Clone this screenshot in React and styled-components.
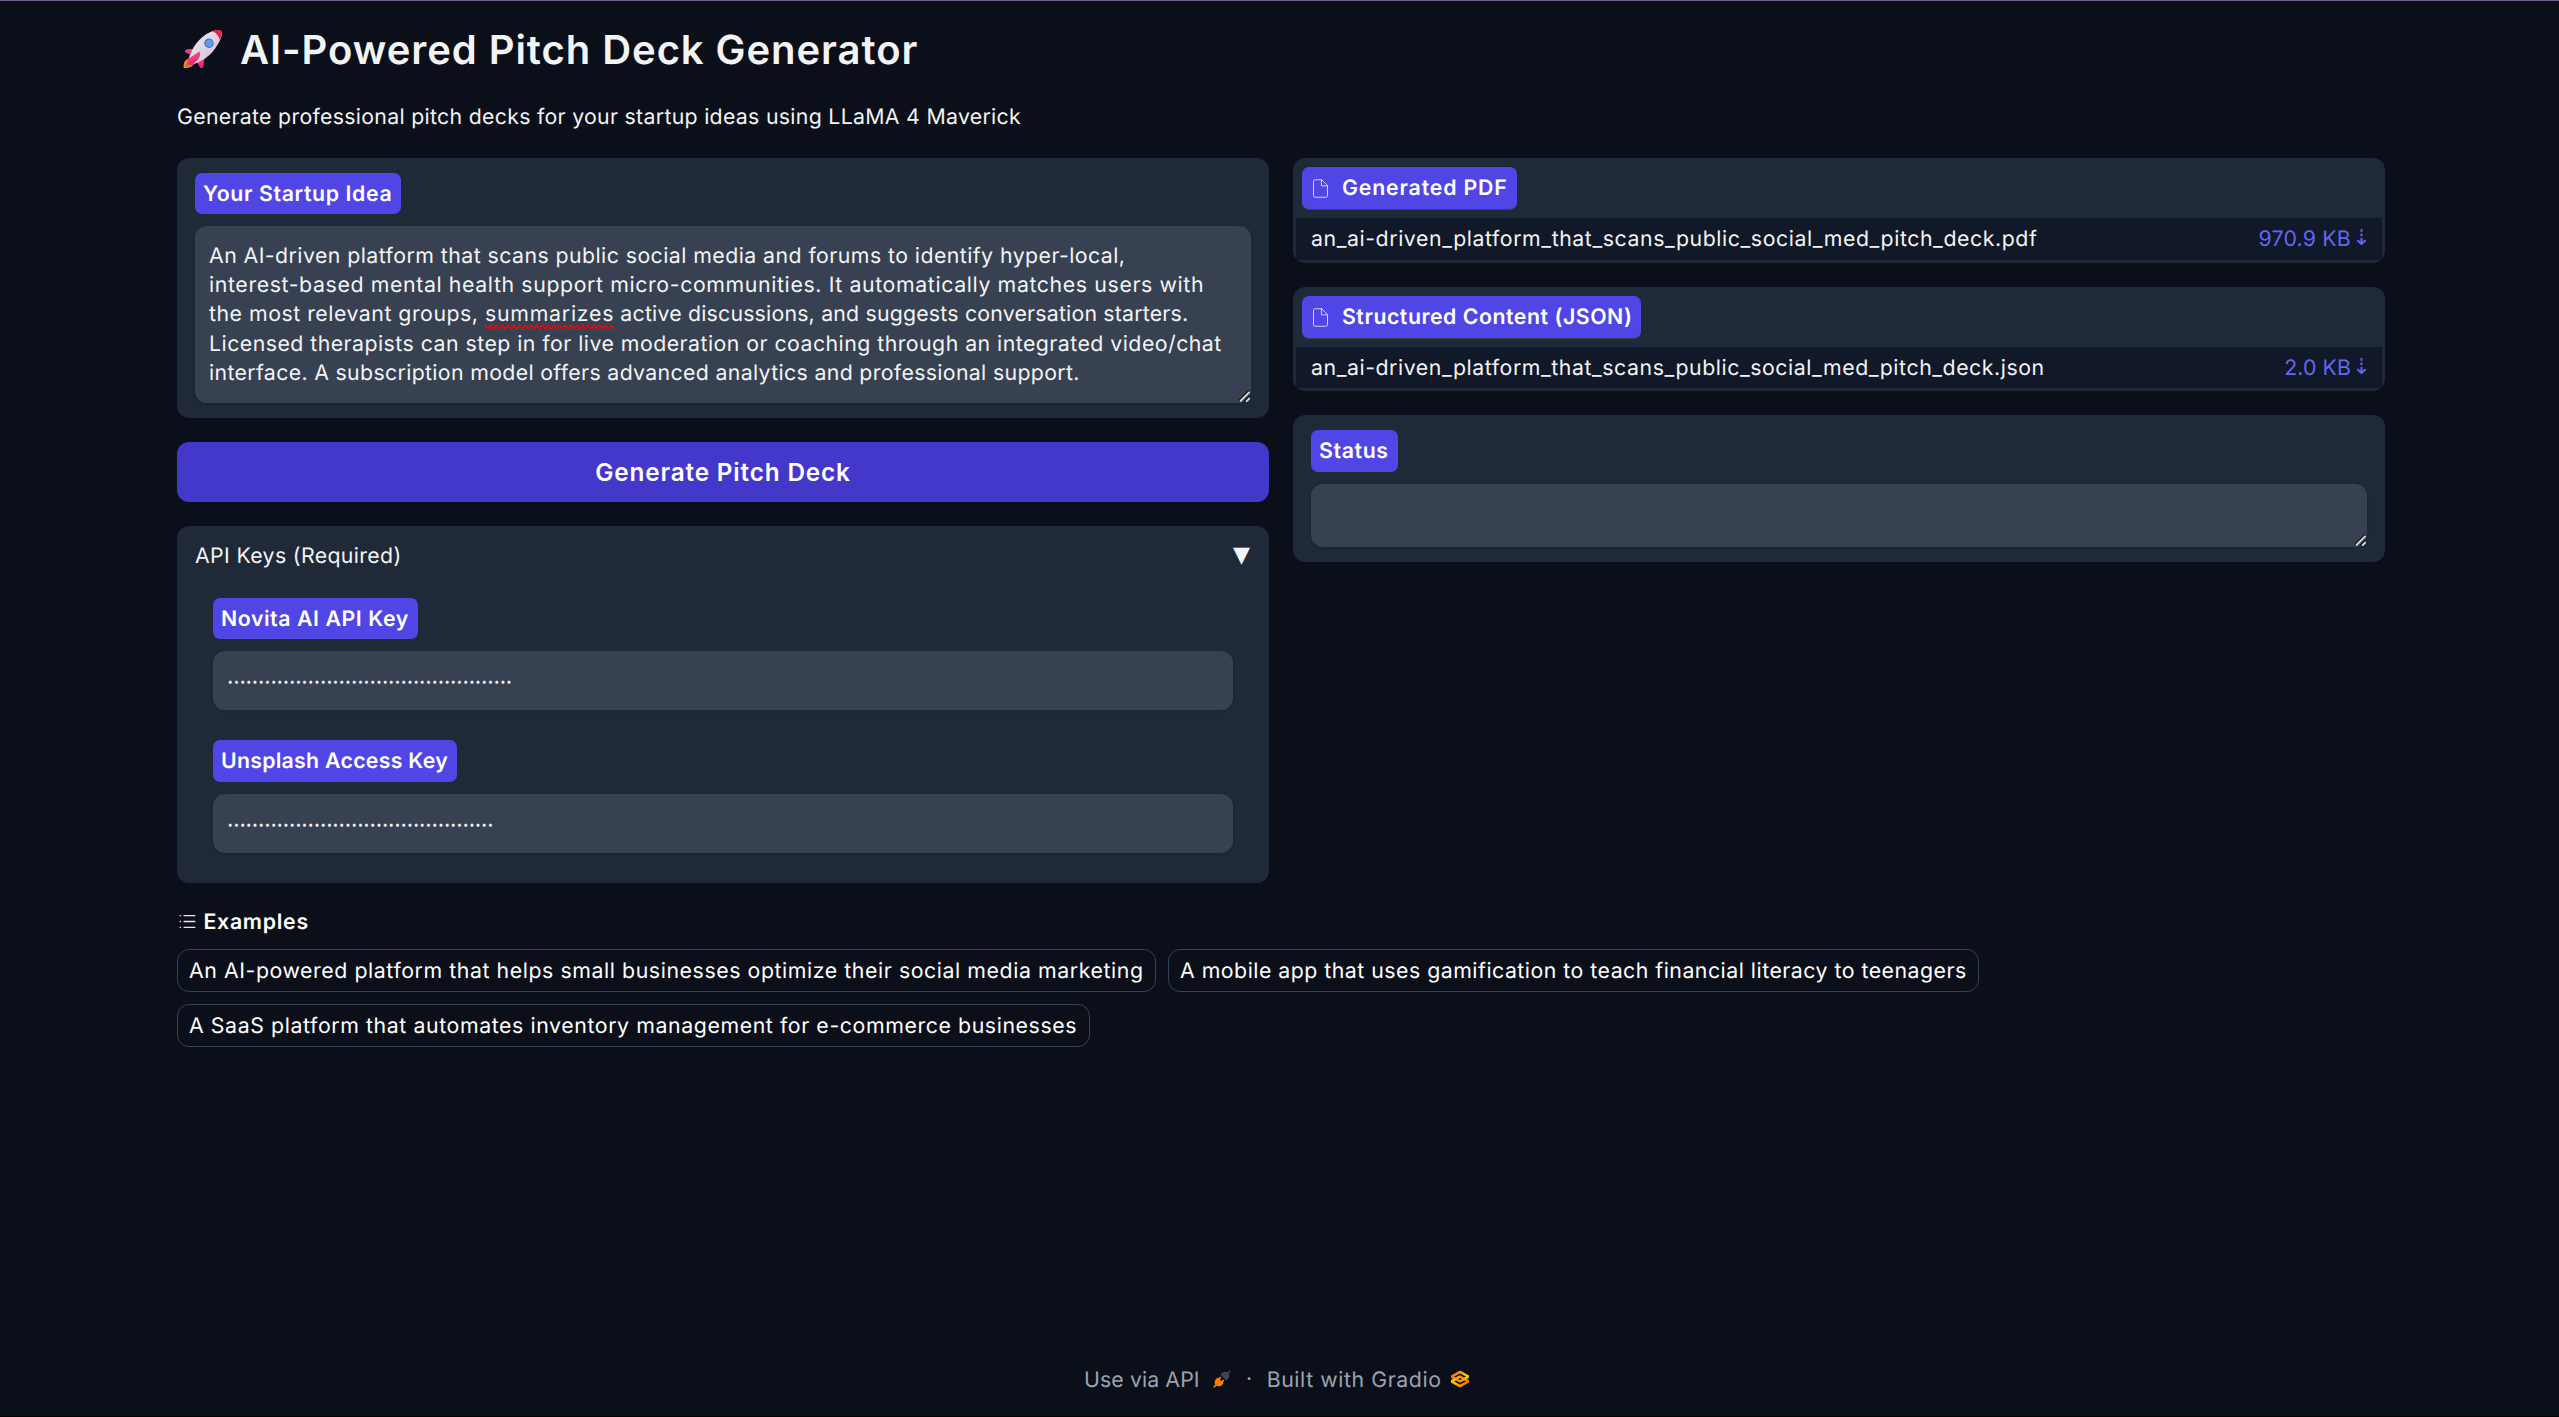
import React from "react";
import styled, { createGlobalStyle } from "styled-components";

const c = {
  page: "#0b0f19",
  block: "#1f2937",
  field: "#374151",
  row: "#111827",
  label: "#4f46e5",
  button: "#4338ca",
  link: "#6366f1",
  text: "#f3f4f6",
  muted: "#9ca3af",
};

const GlobalStyle = createGlobalStyle`
  * { box-sizing: border-box; }
  body {
    margin: 0;
    background: ${c.page};
    color: ${c.text};
    font-family: Inter, "Open Sans", sans-serif;
    font-size: 21.3px;
    line-height: 29.4px;
    text-rendering: geometricPrecision;
  }
`;

const Page = styled.div`
  height: 1417px;
  padding: 19px 174px 0 177px;
  border-top: 1px solid #74608f;
  border-bottom: 1px solid #000;
  display: flex;
  flex-direction: column;
  overflow: hidden;
`;

const Text = styled.span`
  display: inline-block;
  letter-spacing: ${(p) => p.$ls}px;
  white-space: pre;
  transform: translateY(${(p) => p.$y ?? 1}px);
`;

const Header = styled.header`
  height: 138px;
  flex: none;
`;

const Title = styled.h1`
  margin: 0 0 22px;
  height: 60px;
  padding-left: 2px;
  display: flex;
  align-items: center;
  gap: 17px;
  font-size: 40px;
  font-weight: 600;
  line-height: 60px;
`;

const Subtitle = styled.p`
  margin: 0;
`;

const Columns = styled.main`
  display: grid;
  grid-template-columns: 1092px 1092px;
  gap: 24px;
  align-items: start;
`;

const Column = styled.div`
  display: flex;
  flex-direction: column;
  gap: 24px;
`;

const Panel = styled.section`
  background: ${c.block};
  border-radius: 12px;
  padding: 15px 18px;
`;

const Label = styled.div`
  width: fit-content;
  height: ${(p) => p.$h || 41}px;
  padding: 0 9px 0 8px;
  display: flex;
  align-items: center;
  border-radius: 7px;
  background: ${c.label};
  color: #fff;
  font-weight: 600;
  box-shadow: ${(p) => (p.$line ? "0 1px 0 #374151" : "none")};
`;

const Area = styled.div`
  position: relative;
  margin-top: 12px;
  height: ${(p) => p.$h}px;
  padding: 14.5px 14px;
  border-radius: 12px;
  background: ${c.field};
  box-shadow: 0 1px 3px rgba(0, 0, 0, 0.12);
`;

const Line = styled.div`
  height: 29.4px;
  white-space: nowrap;
`;

const Misspelt = styled(Text)`
  position: relative;
`;

const Squiggle = styled.svg`
  position: absolute;
  left: 0;
  bottom: 0;
  width: 100%;
  height: 6px;
`;

const Grip = styled.svg`
  position: absolute;
  right: 1px;
  bottom: 1px;
  width: 12px;
  height: 12px;
`;

const Submit = styled.button`
  height: 60px;
  padding: 0 0 1px;
  border: 0;
  border-radius: 12px;
  background: ${c.button};
  color: #fff;
  font: 600 24.3px Inter, sans-serif;
`;

const Accordion = styled(Panel)`
  height: 357px;
`;

const AccordionHead = styled.div`
  height: 29px;
  margin-bottom: 13px;
  display: flex;
  justify-content: space-between;
`;

const Caret = styled.span`
  margin-right: 1px;
  font-family: "DejaVu Sans", sans-serif;
  font-size: 22px;
  line-height: 29px;
  color: ${c.text};
`;

const Form = styled.div`
  height: 285px;
  border-radius: 12px;
  background: #293341;
`;

const FormBody = styled.div`
  height: 100%;
  padding: 15px 18px;
  border-radius: 12px;
  background: ${c.block};
  display: flex;
  flex-direction: column;
  gap: 30px;
`;

const Secret = styled.div`
  margin-top: 12px;
  height: 59px;
  padding: 4px 0 0 14.5px;
  display: flex;
  align-items: center;
  border-radius: 12px;
  background: ${c.field};
  box-shadow: 0 1px 3px rgba(0, 0, 0, 0.12);
  font-size: 9.6px;
`;

const FilePanel = styled(Panel)`
  height: ${(p) => p.$h}px;
  padding: 9px 3px 3px 3px;
  overflow: hidden;
`;

const FileLabel = styled(Label)`
  margin: 0 0 9px 6px;
  padding-left: 7.5px;
`;

const FileIcon = styled.svg`
  width: 21px;
  height: 21px;
  margin-right: 11.5px;
  fill: none;
  stroke: #fff;
  stroke-width: 1;
  stroke-linecap: round;
  stroke-linejoin: round;
  opacity: 0.85;
`;

const FileRow = styled.div`
  height: ${(p) => p.$h}px;
  padding: 0 15px;
  display: flex;
  align-items: center;
  background: ${c.row};
`;

const Size = styled.span`
  margin-left: auto;
  display: flex;
  align-items: center;
  gap: 5px;
  color: ${c.link};
`;

const Down = styled.span`
  width: 11px;
  display: flex;
  justify-content: center;
  font-family: "DejaVu Sans", sans-serif;
  font-size: 22px;
`;

const ExamplesHead = styled.div`
  margin: 24px 0 13px;
  height: 29px;
  display: flex;
  align-items: center;
  font-weight: 600;
  color: #fff;
`;

const ListIcon = styled.svg`
  width: 21px;
  height: 21px;
  margin-right: 5.5px;
  fill: #e5e7eb;
`;

const Pills = styled.div`
  width: 2000px;
  display: flex;
  flex-wrap: wrap;
  gap: 12px;
`;

const Pill = styled.div`
  height: 43px;
  padding: 0 11.5px 0 11px;
  display: flex;
  align-items: center;
  border: 1px solid ${c.field};
  border-radius: 12px;
  color: #fff;
`;

const Footer = styled.footer`
  margin-top: auto;
  padding: 0 0 22px 907px;
  display: flex;
  align-items: center;
  color: ${c.muted};
`;

const Dot = styled.span`
  width: 36px;
  padding-left: 1px;
  text-align: center;
`;

const PlugSvg = styled.svg`
  width: 18px;
  height: 18px;
  margin-left: 13px;
`;

const GradioSvg = styled.svg`
  width: 24px;
  height: 24px;
  margin-left: 6.5px;
`;

const RocketSvg = styled.svg`
  width: 44px;
  height: 44px;
`;

const Rocket = () => (
  <RocketSvg viewBox="0 0 44 44">
    <defs>
      <linearGradient id="body" x1="0" y1="0" x2="1" y2="1">
        <stop offset="0" stopColor="#f6eff6" />
        <stop offset="1" stopColor="#cdb6d2" />
      </linearGradient>
      <linearGradient id="fin" x1="0" y1="0" x2="0.6" y2="1">
        <stop offset="0" stopColor="#ff5a8a" />
        <stop offset="1" stopColor="#e01f68" />
      </linearGradient>
    </defs>
    <path d="M10.5 30.5C6 31 4.200 35 4.700 40C9.500 40.300 14.500 38.500 15 35Z" fill="#f98f2b" />
    <path d="M8.500 34C6.500 35.500 6 37.500 6 39C9 38.700 11.500 37.500 12.500 35.500Z" fill="#c76a3c" />
    <path d="M17 20.500L8.500 21.300C6 22 5.200 23.500 6.500 24.300L11.500 27Z" fill="url(#fin)" />
    <path d="M26 26L24.500 38C24 41 21.800 41 20.500 38.500L17.500 33Z" fill="url(#fin)" />
    <path d="M9.500 31C13 20 20 9 31 4.200C36 2.200 40.500 1.800 42.300 3.200C43.800 5.500 42 11 39 16C33.500 26 26 32 14 36.500C11 35.500 9.700 33.500 9.500 31Z" fill="url(#body)" />
    <path d="M33.500 3.200C38 1.500 41.300 2 42.300 3.200C43.300 4.700 42.600 8 41 11.800C39.500 7.500 37.500 5.300 33.500 3.200Z" fill="#e5243f" />
    <path d="M9.500 31C11 31 14.500 34 14 36.500L12.500 37C10 36 8.500 33.500 9.500 31Z" fill="#7b3f72" />
    <path d="M20.500 23.500C22 25 21 28.500 19 31.500L13 37.500L9 36L8 31.500Z" fill="url(#fin)" opacity="0.95" />
    <circle cx="30" cy="15.300" r="4.700" fill="#4c6bb0" />
    <circle cx="30.300" cy="15.300" r="3.500" fill="#55a5ee" />
  </RocketSvg>
);

const ResizeGrip = () => (
  <Grip viewBox="0 0 12 12">
    <path d="M0.500 11L11 0.500M6 11.500L11.500 6" stroke="#111" strokeWidth="1.500" />
    <path d="M2 11.500L11.500 2M8 11.800L11.800 8" stroke="#d5d7da" strokeWidth="1.900" />
  </Grip>
);

const squiggle = "M0 1" + Array.from({ length: 45 }, (_, i) => `L${(i + 1) * 2.85} ${i % 2 ? 1 : 5}`).join("");

const Doc = () => (
  <FileIcon viewBox="0 0 24 24">
    <path d="M13 2H6a2 2 0 0 0-2 2v16a2 2 0 0 0 2 2h12a2 2 0 0 0 2-2V9z" />
    <polyline points="13 2 13 9 20 9" />
  </FileIcon>
);

const files = [
  { label: "Generated PDF", ls: 0.83, name: "an_ai-driven_platform_that_scans_public_social_med_pitch_deck.pdf", nls: 0.572, size: "970.9 KB", sls: 0.2, h: 105, rh: 42 },
  { label: "Structured Content (JSON)", ls: 0.52, name: "an_ai-driven_platform_that_scans_public_social_med_pitch_deck.json", nls: 0.557, size: "2.0 KB", sls: 0.1, h: 104, rh: 41 },
];

const examples = [
  ["An AI-powered platform that helps small businesses optimize their social media marketing", 0.573],
  ["A mobile app that uses gamification to teach financial literacy to teenagers", 0.492],
  ["A SaaS platform that automates inventory management for e-commerce businesses", 0.592],
];

export default function App() {
  return (
    <>
      <GlobalStyle />
      <Page>
        <Header>
          <Title>
            <Rocket />
            <Text $ls={0.94} $y={0}>AI-Powered Pitch Deck Generator</Text>
          </Title>
          <Subtitle>
            <Text $ls={0.295}>Generate professional pitch decks for your startup ideas using LLaMA 4 Maverick</Text>
          </Subtitle>
        </Header>
        <Columns>
          <Column>
            <Panel>
              <Label>
                <Text $ls={0.61}>Your Startup Idea</Text>
              </Label>
              <Area $h={177}>
                <Line><Text $ls={0.438}>An AI-driven platform that scans public social media and forums to identify hyper-local,</Text></Line>
                <Line><Text $ls={0.615}>interest-based mental health support micro-communities. It automatically matches users with</Text></Line>
                <Line>
                  <Text $ls={0.51}>{"the most relevant groups, "}</Text>
                  <Misspelt $ls={0.75}>
                    summarizes
                    <Squiggle viewBox="0 0 128 6" preserveAspectRatio="none">
                      <path d={squiggle} fill="none" stroke="#f00" strokeWidth="1.300" />
                    </Squiggle>
                  </Misspelt>
                  <Text $ls={0.2}>{" active discussions, and suggests conversation starters."}</Text>
                </Line>
                <Line><Text $ls={0.463}>Licensed therapists can step in for live moderation or coaching through an integrated video/chat</Text></Line>
                <Line><Text $ls={0.336}>interface. A subscription model offers advanced analytics and professional support.</Text></Line>
                <ResizeGrip />
              </Area>
            </Panel>
            <Submit>
              <Text $ls={0.845} $y={0}>Generate Pitch Deck</Text>
            </Submit>
            <Accordion>
              <AccordionHead>
                <Text $ls={0.35}>API Keys (Required)</Text>
                <Caret>▼</Caret>
              </AccordionHead>
              <Form>
                <FormBody>
                  <div>
                    <Label><Text $ls={0.57}>Novita AI API Key</Text></Label>
                    <Secret><Text $ls={0.8} $y={0}>{"•".repeat(46)}</Text></Secret>
                  </div>
                  <div>
                    <Label $h={42}><Text $ls={0.27}>Unsplash Access Key</Text></Label>
                    <Secret><Text $ls={0.8} $y={0}>{"•".repeat(43)}</Text></Secret>
                  </div>
                </FormBody>
              </Form>
            </Accordion>
          </Column>
          <Column>
            {files.map((f) => (
              <FilePanel key={f.label} $h={f.h}>
                <FileLabel $h={42} $line>
                  <Doc />
                  <Text $ls={f.ls}>{f.label}</Text>
                </FileLabel>
                <FileRow $h={f.rh}>
                  <Text $ls={f.nls}>{f.name}</Text>
                  <Size>
                    <Text $ls={f.sls}>{f.size}</Text>
                    <Down>⇣</Down>
                  </Size>
                </FileRow>
              </FilePanel>
            ))}
            <Panel>
              <Label $h={42}><Text $ls={0.62}>Status</Text></Label>
              <Area $h={63}>
                <ResizeGrip />
              </Area>
            </Panel>
          </Column>
        </Columns>
        <ExamplesHead>
          <ListIcon viewBox="0 0 32 32">
            <path d="M10 6h18v2H10zm0 18h18v2H10zm0-9h18v2H10zm-6 0h2v2H4zm0-9h2v2H4zm0 18h2v2H4z" />
          </ListIcon>
          <Text $ls={0.72}>Examples</Text>
        </ExamplesHead>
        <Pills>
          {examples.map(([t, ls]) => (
            <Pill key={t}><Text $ls={ls}>{t}</Text></Pill>
          ))}
        </Pills>
        <Footer>
          <Text $ls={0.1}>Use via API</Text>
          <PlugSvg viewBox="0 0 28 28">
            <path fill="#3c4555" d="M26.9425 2.94265C27.4632 2.42195 27.4632 1.57773 26.9425 1.05703C26.4218 0.536329 25.5776 0.536329 25.0569 1.05703L22.5713 3.54256C21.1213 2.59333 19.5367 2.43378 18.1753 2.64006C16.5495 2.88638 15.1127 3.66838 14.3905 4.39053L12.3905 6.39053C12.1405 6.64058 12 6.97972 12 7.33334C12 7.68697 12.1405 8.0261 12.3905 8.27615L19.7239 15.6095C20.2446 16.1302 21.0888 16.1302 21.6095 15.6095L23.6095 13.6095C24.3316 12.8873 25.1136 11.4505 25.36 9.82475C25.5663 8.46312 25.4066 6.87827 24.4571 5.42807L26.9425 2.94265Z" />
            <path fill="#ff7c00" d="M12.276 12.9426C12.7967 12.4219 12.7967 11.5777 12.276 11.057C11.7553 10.5363 10.9111 10.5363 10.3904 11.057L8.66651 12.7809L8.27615 12.3905C8.0261 12.1405 7.68697 12 7.33334 12C6.97972 12 6.64058 12.1405 6.39053 12.3905L4.39053 14.3905C3.66838 15.1127 2.88638 16.5495 2.64006 18.1753C2.43377 19.5367 2.59333 21.1214 3.54262 22.5714L1.05703 25.057C0.536329 25.5777 0.536329 26.4219 1.05703 26.9426C1.57773 27.4633 2.42195 27.4633 2.94265 26.9426L5.42817 24.4571C6.87835 25.4066 8.46315 25.5663 9.82475 25.36C11.4505 25.1136 12.8873 24.3316 13.6095 23.6095L15.6095 21.6095C16.1302 21.0888 16.1302 20.2446 15.6095 19.7239L15.2188 19.3332L16.9426 17.6093C17.4633 17.0886 17.4633 16.2444 16.9426 15.7237C16.4219 15.203 15.5777 15.203 15.057 15.7237L13.3332 17.4475L10.5521 14.6665L12.276 12.9426Z" />
          </PlugSvg>
          <Dot>·</Dot>
          <Text $ls={0.573}>Built with Gradio</Text>
          <GradioSvg viewBox="0 0 576 576" fill="none" strokeWidth="59" strokeLinejoin="bevel">
            <defs>
              <linearGradient id="ga" x1="60" y1="341" x2="430" y2="344" gradientUnits="userSpaceOnUse">
                <stop stopColor="#f9d100" />
                <stop offset="1" stopColor="#f97700" />
              </linearGradient>
              <linearGradient id="gb" x1="513" y1="231" x2="143" y2="231" gradientUnits="userSpaceOnUse">
                <stop stopColor="#f9d100" />
                <stop offset="1" stopColor="#f97700" />
              </linearGradient>
            </defs>
            <path d="M287.5 229L86 344.500L287.5 460L489 344.500L287.5 229Z" stroke="url(#ga)" />
            <path d="M287.5 116L86 231.500L287.5 347L489 231.500L287.5 116Z" stroke="url(#gb)" />
            <path d="M86 344L288 229" stroke="url(#ga)" strokeLinejoin="bevel" />
          </GradioSvg>
        </Footer>
      </Page>
    </>
  );
}
